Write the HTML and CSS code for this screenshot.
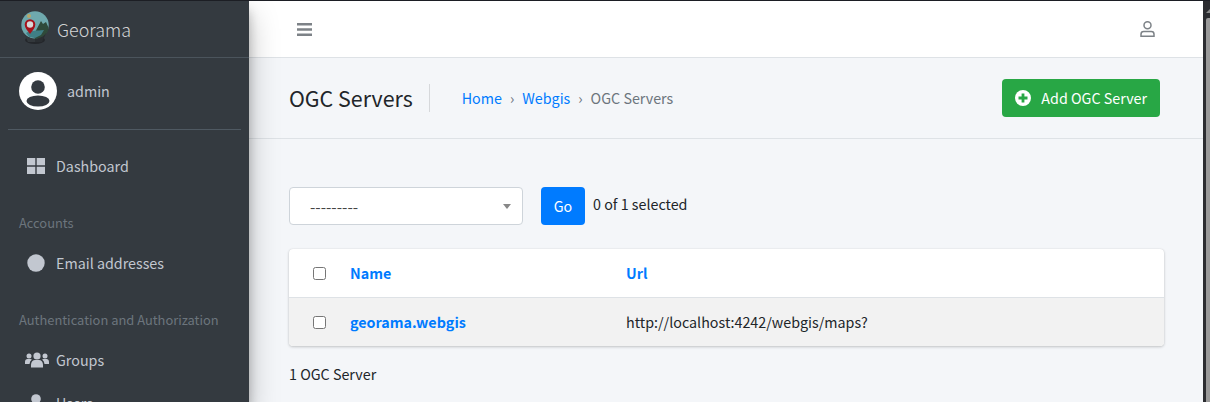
FILE: index.html
```html
<!DOCTYPE html>
<html lang="en">
<head>
  <meta charset="UTF-8">
  <meta name="viewport" content="width=device-width, initial-scale=1.0">
  <title>OGC Servers | Georama</title>
  <link rel="stylesheet" href="styles.css">
</head>
<body>
  <div class="wrapper">
    <!-- Sidebar -->
    <aside class="sidebar">
      <a class="brand" href="#">
        <svg class="brand-logo" viewBox="0 0 30 34" aria-hidden="true">
          <ellipse cx="15" cy="29" rx="10" ry="4" fill="#24272b"/>
          <circle cx="15" cy="14" r="13.700" fill="#6fa9ae"/>
          <path d="M13 25l8-15 2 3 3-2 2.700 6c-1 6-6 11-13.700 11z" fill="#2f4a3a"/>
          <path d="M6 22c5-3 11-2 18-3l-3 5-6 3-6-1z" fill="#3f7f86"/>
          <path d="M2 18c2 6 6 9 13 10v3H8z" fill="#33383c"/>
          <path d="M28 18c-2 6-6 9-13 10v3h7z" fill="#2a2e32"/>
          <circle cx="9" cy="5" r="2" fill="#b9a76a"/>
          <path d="M10 23c-3-4-5.300-6.500-5.300-9.500a5.300 5.300 0 0 1 10.600 0c0 3-2.300 5.500-5.300 9.500z" fill="#a5121b"/>
          <circle cx="10" cy="13.500" r="3.200" fill="#d8d8d8"/>
        </svg>
        <span class="brand-text">Georama</span>
      </a>

      <div class="user-panel">
        <svg class="user-avatar" viewBox="0 0 38 38" aria-hidden="true">
          <circle cx="19" cy="19" r="19" fill="#fff"/>
          <circle cx="19" cy="15" r="6.800" fill="#343a40"/>
          <ellipse cx="19" cy="29" rx="11.500" ry="5.500" fill="#343a40"/>
        </svg>
        <span class="user-name">admin</span>
      </div>

      <nav class="side-nav">
        <a class="nav-link" href="#">
          <svg class="nav-icon" viewBox="0 0 18 16" aria-hidden="true">
            <path d="M0 0h8.300v7.300H0zM9.700 0H18v7.300H9.700zM0 8.700h8.300V16H0zM9.700 8.700H18V16H9.700z" fill="#c2c7d0"/>
          </svg>
          <span>Dashboard</span>
        </a>
        <div class="nav-header">Accounts</div>
        <a class="nav-link" href="#">
          <svg class="nav-icon" viewBox="0 0 18 18" aria-hidden="true">
            <circle cx="9" cy="9" r="8.700" fill="#c2c7d0"/>
          </svg>
          <span>Email addresses</span>
        </a>
        <div class="nav-header">Authentication and Authorization</div>
        <a class="nav-link" href="#">
          <svg class="nav-icon nav-icon-wide" viewBox="0 0 24 16" aria-hidden="true">
            <g fill="#c2c7d0">
              <circle cx="12" cy="4" r="3.600"/>
              <circle cx="4" cy="4" r="2.500"/>
              <circle cx="20" cy="4" r="2.500"/>
              <path d="M6 15.500v-3c0-2.700 2-4.500 4-4.500h4c2 0 4 1.800 4 4.500v3z"/>
              <path d="M0 10c0-1.700 1-3 2.500-3h3c.6 0 1 .2 1.400.5A6 6 0 0 0 4.500 12H0z"/>
              <path d="M24 10c0-1.700-1-3-2.500-3h-3c-.6 0-1 .2-1.400.5a6 6 0 0 1 2.400 4.500H24z"/>
            </g>
          </svg>
          <span>Groups</span>
        </a>
        <a class="nav-link" href="#">
          <svg class="nav-icon" viewBox="0 0 18 18" aria-hidden="true">
            <g fill="#c2c7d0">
              <circle cx="9" cy="5" r="4.800"/>
              <path d="M2 18v-2c0-3 2.500-5 5-5h4c2.500 0 5 2 5 5v2z"/>
            </g>
          </svg>
          <span>Users</span>
        </a>
      </nav>
    </aside>

    <div class="main">
      <!-- Top bar -->
      <header class="navbar">
        <svg class="bars" viewBox="0 0 15 13" aria-hidden="true">
          <path d="M0 0h15v2.400H0zM0 5.300h15v2.400H0zM0 10.600h15V13H0z" fill="#7d8287"/>
        </svg>
        <svg class="user-outline" viewBox="0 0 15 16" aria-hidden="true">
          <circle cx="7.500" cy="4.300" r="3.500" fill="none" stroke="#7d8287" stroke-width="1.500"/>
          <path d="M1 15.200v-2c0-1.500 1.200-2.700 2.700-2.700h7.600c1.500 0 2.700 1.200 2.700 2.700v2z" fill="none" stroke="#7d8287" stroke-width="1.500"/>
        </svg>
      </header>

      <!-- Page title -->
      <section class="content-header">
        <h1>OGC Servers</h1>
        <ol class="breadcrumb">
          <li><a href="#">Home</a></li>
          <li class="sep">›</li>
          <li><a href="#">Webgis</a></li>
          <li class="sep">›</li>
          <li class="current">OGC Servers</li>
        </ol>
        <a class="btn-add" href="#">
          <svg class="plus-icon" viewBox="0 0 16 16" aria-hidden="true">
            <circle cx="8" cy="8" r="8" fill="#fff"/>
            <path d="M6.600 3.500h2.800v3.100h3.100v2.800H9.400v3.100H6.600V9.400H3.500V6.600h3.100z" fill="#28a745"/>
          </svg>
          <span>Add OGC Server</span>
        </a>
      </section>

      <section class="content">
        <div class="actions">
          <div class="select-box">
            <span>---------</span>
            <span class="caret"></span>
          </div>
          <button class="btn-go" type="button">Go</button>
          <span class="counter">0 of 1 selected</span>
        </div>

        <div class="card">
          <div class="row row-head">
            <span class="check"></span>
            <a class="col-name" href="#">Name</a>
            <a class="col-url col-sort" href="#">Url</a>
          </div>
          <div class="row row-odd">
            <span class="check"></span>
            <a class="col-name" href="#">georama.webgis</a>
            <span class="col-url">http://localhost:4242/webgis/maps?</span>
          </div>
        </div>

        <p class="paginator">1 OGC Server</p>
      </section>
    </div>

    <div class="scrollbar">
      <div class="scroll-arrow"></div>
      <div class="scroll-thumb"></div>
    </div>
  </div>
</body>
</html>
```

FILE: styles.css
```css
* {
  box-sizing: border-box;
}

html,
body {
  height: 100%;
}

body {
  margin: 0;
  overflow: hidden;
  font-family: "Noto Sans CJK JP", "Noto Sans", sans-serif;
  font-size: 14.300px;
  line-height: 22px;
  color: #212529;
  background: #f4f6f9;
}

a {
  text-decoration: none;
  color: #007bff;
}

.wrapper {
  display: flex;
  height: 402px;
  border-top: 1px solid #1c1e24;
  overflow: hidden;
}

/* sidebar */
.sidebar {
  flex: 0 0 249px;
  background: #343a40;
  box-shadow: 0 14px 28px rgba(0, 0, 0, 0.25), 0 10px 10px rgba(0, 0, 0, 0.22);
  z-index: 2;
}

.brand {
  display: flex;
  align-items: center;
  height: 57px;
  padding-left: 20px;
  border-bottom: 1px solid #4b545c;
}

.brand-logo {
  width: 30px;
  height: 34px;
  margin-bottom: 2px;
}

.brand-text {
  margin-left: 7px;
  font-size: 17.900px;
  font-weight: 300;
  color: rgba(255, 255, 255, 0.8);
}

.user-panel {
  display: flex;
  align-items: center;
  height: 72px;
  margin: 0 8px;
  padding: 0 0 6px 11px;
  border-bottom: 1px solid #4f5962;
}

.user-avatar {
  width: 38px;
  height: 38px;
}

.user-name {
  margin-left: 10px;
  color: #c2c7d0;
}

.side-nav {
  padding: 16px 8px 0;
}

.nav-link {
  display: flex;
  align-items: center;
  height: 40px;
  padding-left: 17px;
  color: #c2c7d0;
}

.nav-link + .nav-link {
  margin-top: 3px;
}

.nav-icon {
  flex: 0 0 auto;
  width: 18px;
  height: 18px;
  margin: 0 11px 0 2px;
}

.nav-icon-wide {
  width: 24px;
  margin: 0 7px 0 0;
}

.nav-header {
  height: 24px;
  margin: 25px 0 8px;
  padding-left: 11px;
  font-size: 12.900px;
  line-height: 24px;
  color: #6c757d;
}

/* main column */
.main {
  flex: 1;
  min-width: 0;
}

.navbar {
  display: flex;
  align-items: center;
  justify-content: space-between;
  height: 57px;
  padding: 0 48px;
  background: #fff;
  border-bottom: 1px solid #dee2e6;
}

.bars {
  width: 15px;
  height: 13px;
}

.user-outline {
  width: 15px;
  height: 16px;
}

.content-header {
  display: flex;
  align-items: center;
  height: 81px;
  padding: 0 43px 0 40px;
  border-bottom: 1px solid #dee2e6;
}

.content-header h1 {
  margin: 0;
  padding-right: 16px;
  border-right: 1px solid #d6d8db;
  font-size: 21.400px;
  font-weight: 400;
  line-height: 28px;
}

.breadcrumb {
  display: flex;
  flex: 1;
  margin: 0;
  padding: 0 0 0 32px;
  list-style: none;
}

.sep {
  padding: 0 8px;
  color: #6c757d;
}

.current {
  color: #6c757d;
}

.btn-add {
  display: flex;
  align-items: center;
  height: 38px;
  padding: 0 13px;
  border-radius: 4px;
  background: #28a745;
  color: #fff;
}

.plus-icon {
  width: 16px;
  height: 16px;
  margin-right: 10px;
}

.content {
  padding: 48px 39px 0 40px;
}

.actions {
  display: flex;
  align-items: flex-start;
  height: 38px;
}

.select-box {
  display: flex;
  align-items: center;
  justify-content: space-between;
  width: 234px;
  height: 38px;
  padding: 0 11px 0 20px;
  border: 1px solid #ced4da;
  border-radius: 4px;
  background: #fff;
  font-size: 15.400px;
  color: #444;
}

.caret {
  border-top: 5px solid #888;
  border-left: 4px solid transparent;
  border-right: 4px solid transparent;
}

.btn-go {
  width: 44px;
  height: 38px;
  margin-left: 18px;
  padding: 0;
  border: none;
  border-radius: 4px;
  background: #007bff;
  color: #fff;
  font: inherit;
}

.counter {
  margin-left: 8px;
  line-height: 33px;
}

.card {
  margin-top: 24px;
  border-radius: 4px;
  background: #fff;
  box-shadow: 0 0 1px rgba(0, 0, 0, 0.125), 0 1px 3px rgba(0, 0, 0, 0.2);
  overflow: hidden;
}

.row {
  display: flex;
  align-items: center;
  height: 48px;
  padding-left: 24px;
}

.row-head {
  height: 49px;
  border-bottom: 1px solid #dee2e6;
}

.row-odd {
  background: #f2f2f2;
}

.check {
  flex: 0 0 auto;
  width: 13px;
  height: 13px;
  border: 1px solid #767676;
  border-radius: 2.500px;
  background: #fff;
}

.col-name {
  width: 276px;
  margin-left: 24px;
  font-weight: 700;
}

.col-sort {
  font-weight: 700;
}

.paginator {
  margin: 17px 0 0;
}

/* window scrollbar */
.scrollbar {
  flex: 0 0 7px;
  padding-left: 3px;
  background: #2b2c30;
}

.scroll-arrow {
  width: 4px;
  height: 4px;
  margin-top: 8px;
  background: #8b8b8b;
  clip-path: polygon(0 100%, 100% 0, 100% 100%);
}

.scroll-thumb {
  height: 400px;
  margin-top: 5px;
  border-top-left-radius: 2px;
  background: #9a9a9a;
}
```
